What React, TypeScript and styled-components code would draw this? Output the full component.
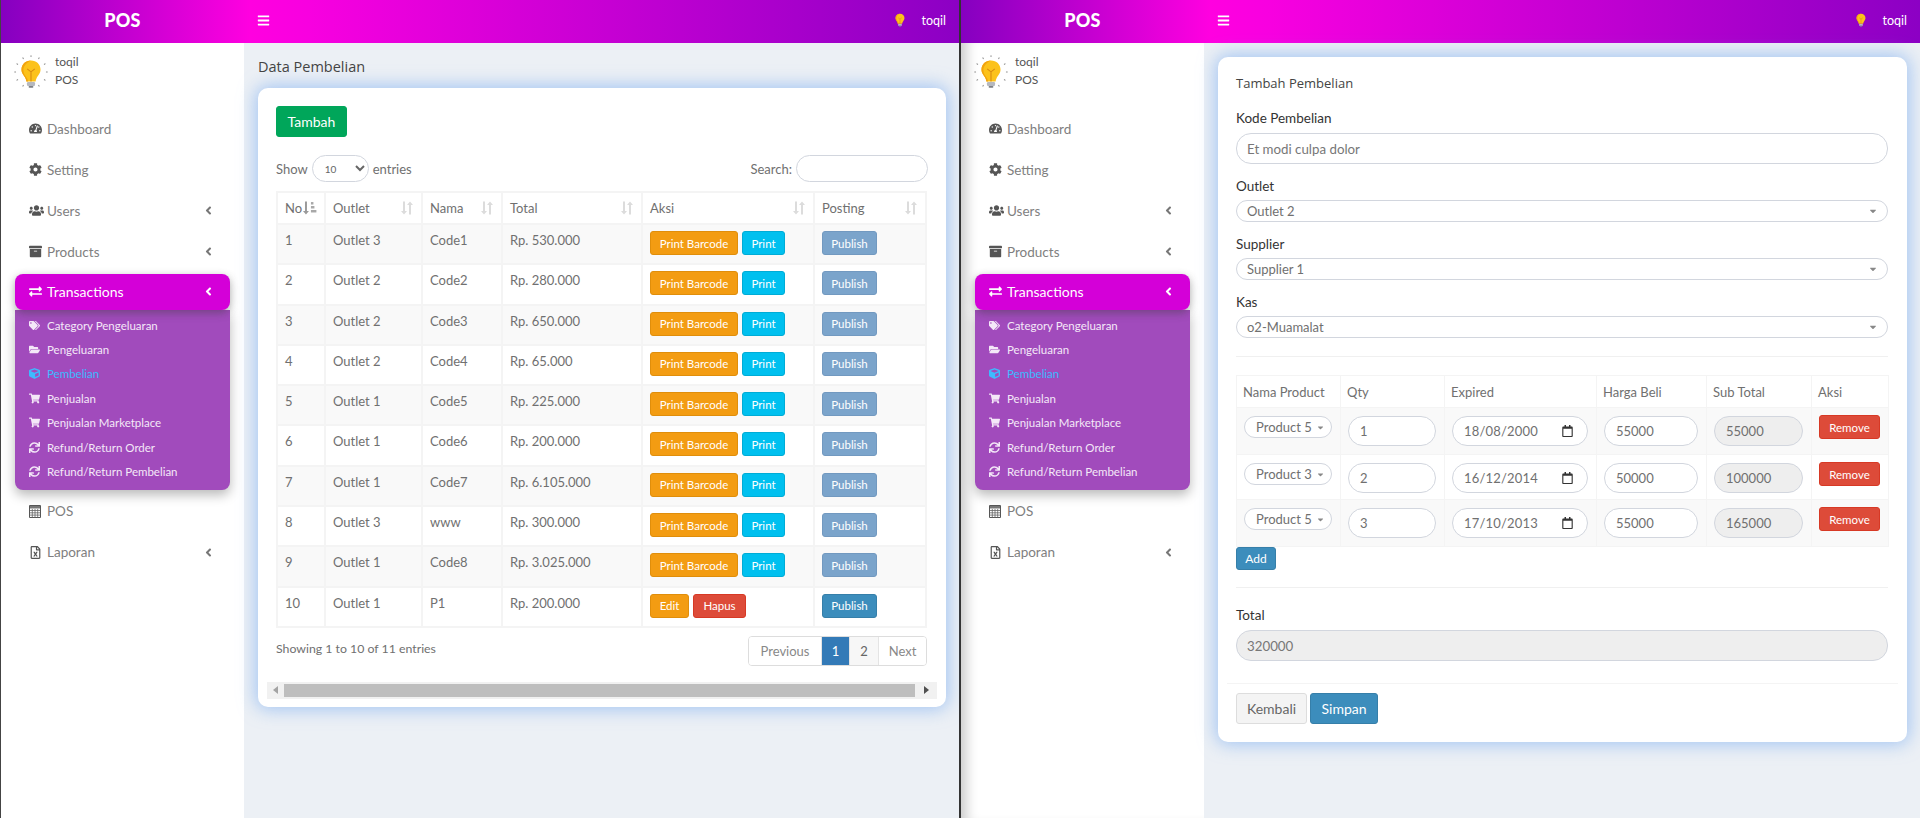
import React from "react";
import styled, { createGlobalStyle } from "styled-components";
import {
    FaAngleLeft,
    FaArchive,
    FaBars,
    FaCaretDown,
    FaCog,
    FaCube,
    FaExchangeAlt,
    FaFolderOpen,
    FaRegCalendar,
    FaRegFileExcel,
    FaShoppingCart,
    FaSync,
    FaTachometerAlt,
    FaTags,
    FaUsers,
} from "react-icons/fa";

const FONT = `Lato, "Open Sans", sans-serif`;

const GlobalStyle = createGlobalStyle`
    html, body {
        margin: 0;
        padding: 0;
        background: #ecf0f5;
    }

    * {
        box-sizing: border-box;
    }

    body {
        font-family: ${FONT};
    }
`;

const subItems = [
    { label: "Category Pengeluaran", icon: <FaTags /> },
    { label: "Pengeluaran", icon: <FaFolderOpen /> },
    { label: "Pembelian", icon: <FaCube />, active: true },
    { label: "Penjualan", icon: <FaShoppingCart /> },
    { label: "Penjualan Marketplace", icon: <FaShoppingCart /> },
    { label: "Refund/Return Order", icon: <FaSync /> },
    { label: "Refund/Return Pembelian", icon: <FaSync /> },
];

const purchases = [
    ["1", "Outlet 3", "Code1", "Rp. 530.000"],
    ["2", "Outlet 2", "Code2", "Rp. 280.000"],
    ["3", "Outlet 2", "Code3", "Rp. 650.000"],
    ["4", "Outlet 2", "Code4", "Rp. 65.000"],
    ["5", "Outlet 1", "Code5", "Rp. 225.000"],
    ["6", "Outlet 1", "Code6", "Rp. 200.000"],
    ["7", "Outlet 1", "Code7", "Rp. 6.105.000"],
    ["8", "Outlet 3", "www", "Rp. 300.000"],
    ["9", "Outlet 1", "Code8", "Rp. 3.025.000"],
    ["10", "Outlet 1", "P1", "Rp. 200.000"],
];

const purchaseColumns = [
    { label: "No", width: 48, sorted: true },
    { label: "Outlet", width: 97 },
    { label: "Nama", width: 80 },
    { label: "Total", width: 140 },
    { label: "Aksi", width: 172 },
    { label: "Posting", width: 112 },
];

const lines = [
    { product: "Product 5", qty: "1", expired: "18/08/2000", price: "55000", sub: "55000" },
    { product: "Product 3", qty: "2", expired: "16/12/2014", price: "50000", sub: "100000" },
    { product: "Product 5", qty: "3", expired: "17/10/2013", price: "55000", sub: "165000" },
];

const lineColumns = [
    { label: "Nama Product", width: 104 },
    { label: "Qty", width: 104 },
    { label: "Expired", width: 152 },
    { label: "Harga Beli", width: 110 },
    { label: "Sub Total", width: 105 },
    { label: "Aksi", width: 77 },
];

const BulbIcon = ({ size, rays }: { size: number; rays?: boolean }) => (
    <svg width={size} height={size} viewBox={rays ? "0 0 32 32" : "7 6 18 25"}>
        {rays &&
            [0, 30, 60, 90, 120, 150, 210, 240, 270, 300, 330].map((angle) => (
                <line
                    key={angle}
                    x1="16"
                    y1="0.3"
                    x2="16"
                    y2="1.9"
                    stroke="#8a8a8a"
                    strokeWidth="0.9"
                    transform={`rotate(${angle} 16 16)`}
                />
            ))}
        <g transform={rays ? "translate(16 17) scale(1.12) translate(-16 -18)" : undefined}>
            <path
                d="M16 7.5c-4.6 0-8 3.3-8 7.6 0 3.4 2.2 5 3.3 7.2.5 1 .7 1.7.8 2.7h7.8c.1-1 .3-1.7.8-2.7 1.1-2.2 3.3-3.8 3.3-7.2 0-4.3-3.4-7.6-8-7.6z"
                fill="#fcc21b"
            />
            <path
                d="M16 7.5c-4.6 0-8 3.3-8 7.6 0 3.4 2.2 5 3.3 7.2.5 1 .7 1.7.8 2.7h1.5c-.2-3-4-5-4-9.5 0-3.5 2.8-6.3 6.4-8z"
                fill="#f2a30f"
            />
            <path d="M12.8 14.5 16 17l3.2-2.5M16 17v8" stroke="#d98a10" strokeWidth="0.9" fill="none" />
            <rect x="12.6" y="25.5" width="6.8" height="3.4" rx="1" fill="#b5b8bf" />
            <rect x="14" y="28.9" width="4" height="1.5" rx="0.7" fill="#7d8087" />
        </g>
    </svg>
);

const CalculatorIcon = () => (
    <svg width="12" height="13" viewBox="0 0 12 13">
        <path d="M.5.5h11v12H.5z" fill="none" stroke="#555" />
        <path d="M1 1h10v2.5H1z" fill="#777" />
        <path d="M1 5.5h10M1 7.8h10M1 10.1h10M3.3 4v8.5M6 4v8.5M8.7 4v8.5" stroke="#666" strokeWidth="0.8" />
    </svg>
);

const SortIdle = () => (
    <svg width="15" height="14" viewBox="0 0 15 14">
        <path d="M4 .5h2V10h2l-3 3.5L2 10h2z" fill="#dcdcdc" />
        <path d="M10 13.5h2V4h2L11 .5 8 4h2z" fill="#dcdcdc" />
    </svg>
);

const SortActive = () => (
    <svg width="15" height="14" viewBox="0 0 15 14">
        <path d="M3 .5h2V10h2l-3 3.5L1 10h2z" fill="#9a9a9a" />
        <rect x="9" y="1" width="2.5" height="2.5" fill="#a8a8a8" />
        <rect x="9" y="5" width="3.5" height="2.5" fill="#a8a8a8" />
        <rect x="9" y="9" width="5.5" height="2.5" fill="#a8a8a8" />
    </svg>
);

const Sidebar = ({ shaded }: { shaded?: boolean }) => (
    <Side $shaded={shaded}>
        <UserPanel>
            <BulbIcon size={34} rays />
            <UserInfo>
                <span>toqil</span>
                <span>POS</span>
            </UserInfo>
        </UserPanel>
        <Menu>
            <MenuItem>
                <MenuIcon><FaTachometerAlt /></MenuIcon>
                Dashboard
            </MenuItem>
            <MenuItem>
                <MenuIcon><FaCog /></MenuIcon>
                Setting
            </MenuItem>
            <MenuItem>
                <MenuIcon $big><FaUsers /></MenuIcon>
                Users
                <Chevron><FaAngleLeft /></Chevron>
            </MenuItem>
            <MenuItem>
                <MenuIcon><FaArchive /></MenuIcon>
                Products
                <Chevron><FaAngleLeft /></Chevron>
            </MenuItem>
            <Group>
                <GroupHead>
                    <MenuIcon><FaExchangeAlt /></MenuIcon>
                    Transactions
                    <Chevron><FaAngleLeft /></Chevron>
                </GroupHead>
                <SubMenu>
                    {subItems.map((item) => (
                        <SubItem key={item.label} $active={item.active}>
                            <SubIcon>{item.icon}</SubIcon>
                            {item.label}
                        </SubItem>
                    ))}
                </SubMenu>
            </Group>
            <MenuItem>
                <MenuIcon><CalculatorIcon /></MenuIcon>
                POS
            </MenuItem>
            <MenuItem>
                <MenuIcon><FaRegFileExcel /></MenuIcon>
                Laporan
                <Chevron><FaAngleLeft /></Chevron>
            </MenuItem>
        </Menu>
    </Side>
);

const TopBar = () => (
    <Header>
        <Logo>POS</Logo>
        <Burger><FaBars /></Burger>
        <HeaderUser>
            <BulbIcon size={14} />
            <span>toqil</span>
        </HeaderUser>
    </Header>
);

const ListPage = () => (
    <Main>
        <PageTitle>Data Pembelian</PageTitle>
        <ListCard>
            <AddButton>Tambah</AddButton>
            <TableTools>
                <ToolGroup>
                    Show
                    <LengthSelect defaultValue="10">
                        <option value="10">10</option>
                    </LengthSelect>
                    entries
                </ToolGroup>
                <ToolGroup>
                    Search:
                    <SearchInput />
                </ToolGroup>
            </TableTools>
            <DataTable>
                <thead>
                    <tr>
                        {purchaseColumns.map((col) => (
                            <HeadCell key={col.label} $width={col.width}>
                                <HeadInner>
                                    {col.label}
                                    {col.sorted ? <SortActive /> : <SortIdle />}
                                </HeadInner>
                            </HeadCell>
                        ))}
                    </tr>
                </thead>
                <tbody>
                    {purchases.map((row, i) => {
                        const last = i === purchases.length - 1;
                        return (
                            <StripedRow key={row[0]}>
                                {row.map((value) => (
                                    <Cell key={value}>{value}</Cell>
                                ))}
                                <Cell>
                                    <Actions>
                                        {last ? (
                                            <>
                                                <SmallButton $width={39} $bg="#f39c12" $edge="#e08e0b">Edit</SmallButton>
                                                <SmallButton $width={53} $bg="#dd4b39" $edge="#d73925">Hapus</SmallButton>
                                            </>
                                        ) : (
                                            <>
                                                <SmallButton $width={88} $bg="#f39c12" $edge="#e08e0b">Print Barcode</SmallButton>
                                                <SmallButton $width={43} $bg="#00c0ef" $edge="#00acd6">Print</SmallButton>
                                            </>
                                        )}
                                    </Actions>
                                </Cell>
                                <Cell>
                                    <Actions>
                                        <SmallButton
                                            $width={55}
                                            $bg={last ? "#3c8dbc" : "#7ba4cb"}
                                            $edge={last ? "#367fa9" : "#7299c0"}
                                        >
                                            Publish
                                        </SmallButton>
                                    </Actions>
                                </Cell>
                            </StripedRow>
                        );
                    })}
                </tbody>
            </DataTable>
            <TableFooter>
                <span>Showing 1 to 10 of 11 entries</span>
                <Pagination>
                    <PageLink $width={72} $muted>Previous</PageLink>
                    <PageLink $width={28} $current>1</PageLink>
                    <PageLink $width={29} $grey>2</PageLink>
                    <PageLink $width={48} $muted>Next</PageLink>
                </Pagination>
            </TableFooter>
            <ScrollTrack>
                <ScrollArrow $width={17}>
                    <svg width="5" height="8" viewBox="0 0 5 8"><path d="M5 0v8L0 4z" fill="#a3a3a3" /></svg>
                </ScrollArrow>
                <ScrollThumb />
                <ScrollArrow $width={22}>
                    <svg width="5" height="8" viewBox="0 0 5 8"><path d="M0 0v8l5-4z" fill="#505050" /></svg>
                </ScrollArrow>
            </ScrollTrack>
        </ListCard>
    </Main>
);

const FormPage = () => (
    <Main>
        <FormCard>
            <FormBody>
                <FormTitle>Tambah Pembelian</FormTitle>
                <FieldLabel>Kode Pembelian</FieldLabel>
                <TextField defaultValue="Et modi culpa dolor" />
                <FieldLabel $tight>Outlet</FieldLabel>
                <PillSelect>Outlet 2<SelectCaret><FaCaretDown /></SelectCaret></PillSelect>
                <FieldLabel $tight>Supplier</FieldLabel>
                <PillSelect>Supplier 1<SelectCaret><FaCaretDown /></SelectCaret></PillSelect>
                <FieldLabel $tight>Kas</FieldLabel>
                <PillSelect>o2-Muamalat<SelectCaret><FaCaretDown /></SelectCaret></PillSelect>
                <Rule />
                <LineTable>
                    <thead>
                        <tr>
                            {lineColumns.map((col) => (
                                <LineHead key={col.label} $width={col.width}>{col.label}</LineHead>
                            ))}
                        </tr>
                    </thead>
                    <tbody>
                        {lines.map((line, i) => (
                            <LineRow key={i} $short={i === 1}>
                                <LineCell>
                                    <ProductSelect>
                                        {line.product}
                                        <ProductCaret><FaCaretDown /></ProductCaret>
                                    </ProductSelect>
                                </LineCell>
                                <LineCell>
                                    <CellField defaultValue={line.qty} />
                                </LineCell>
                                <LineCell>
                                    <DateField>
                                        {line.expired}
                                        <FaRegCalendar />
                                    </DateField>
                                </LineCell>
                                <LineCell>
                                    <CellField defaultValue={line.price} />
                                </LineCell>
                                <LineCell>
                                    <CellField defaultValue={line.sub} disabled />
                                </LineCell>
                                <LineCell>
                                    <Actions>
                                        <SmallButton $width={61} $bg="#dd4b39" $edge="#d73925">Remove</SmallButton>
                                    </Actions>
                                </LineCell>
                            </LineRow>
                        ))}
                    </tbody>
                </LineTable>
                <AddLine>Add</AddLine>
                <LowerRule />
                <FieldLabel>Total</FieldLabel>
                <TextField defaultValue="320000" disabled />
            </FormBody>
            <FormFooter>
                <BackButton>Kembali</BackButton>
                <SaveButton>Simpan</SaveButton>
            </FormFooter>
        </FormCard>
    </Main>
);

export default function App() {
    return (
        <>
            <GlobalStyle />
            <Screen>
                <LeftPane>
                    <TopBar />
                    <Body>
                        <Sidebar />
                        <ListPage />
                    </Body>
                </LeftPane>
                <RightPane>
                    <TopBar />
                    <Body>
                        <Sidebar shaded />
                        <FormPage />
                    </Body>
                </RightPane>
            </Screen>
        </>
    );
}

const Screen = styled.div`
    width: 1920px;
    height: 818px;
    display: grid;
    grid-template-columns: 960px 960px;
    overflow: hidden;
`;

const LeftPane = styled.div`
    display: flex;
    flex-direction: column;
    height: 818px;
    border-left: 1px solid #444;
    border-right: 1px solid #333;
`;

const RightPane = styled.div`
    display: flex;
    flex-direction: column;
    height: 818px;
    border-left: 1px solid #333;
`;

const Header = styled.header`
    height: 43px;
    flex: none;
    display: flex;
    align-items: center;
    padding-bottom: 3px;
    color: white;
    background: linear-gradient(90deg, #8500c0 0%, #ff00e0 26%, #f800e0 32%, #8c00c4 100%);
`;

const Logo = styled.div`
    width: 243px;
    flex: none;
    text-align: center;
    font-size: 18px;
    font-weight: 900;
    letter-spacing: 0.3px;
`;

const Burger = styled.div`
    display: flex;
    margin-left: 13px;
    font-size: 13px;
`;

const HeaderUser = styled.div`
    margin-left: auto;
    margin-right: 13px;
    display: flex;
    align-items: center;
    gap: 15px;
    font-size: 12.5px;
`;

const Body = styled.div`
    flex: 1;
    display: flex;
    min-height: 0;
`;

const Side = styled.aside<{ $shaded?: boolean }>`
    width: 243px;
    flex: none;
    background: white;
    box-shadow: ${({ $shaded }) => ($shaded ? "inset 14px 0 12px -8px rgba(0, 0, 0, 0.2)" : "none")};
`;

const UserPanel = styled.div`
    height: 65px;
    padding: 12px 0 0 13px;
    display: flex;
    gap: 7px;
`;

const UserInfo = styled.div`
    display: flex;
    flex-direction: column;
    gap: 4px;
    font-size: 12px;
    line-height: 14px;
    color: #555;
`;

const Menu = styled.nav`
    display: flex;
    flex-direction: column;
    font-size: 13.5px;
    color: #808080;
`;

const MenuItem = styled.div`
    height: 41px;
    display: flex;
    align-items: center;
    padding: 0 29px 0 28px;
`;

const MenuIcon = styled.span<{ $big?: boolean }>`
    width: 18px;
    flex: none;
    display: flex;
    font-size: ${({ $big }) => ($big ? 15 : 13)}px;
    color: #555;
`;

const Chevron = styled.span`
    margin-left: auto;
    display: flex;
    font-size: 13px;
    color: #777;
`;

const Group = styled.div`
    margin: 2px 14px 1px 14px;
    color: white;
`;

const GroupHead = styled.div`
    position: relative;
    z-index: 1;
    height: 36px;
    display: flex;
    align-items: center;
    padding: 0 15px 2px 14px;
    border-radius: 8px;
    background: #d400d8;
    box-shadow: 0 3px 8px rgba(60, 60, 60, 0.45);
    font-size: 14px;

    ${MenuIcon}, ${Chevron} {
        color: white;
    }
`;

const SubMenu = styled.div`
    padding: 3px 0 6px;
    border-radius: 0 0 8px 8px;
    background: #a14bbc;
    box-shadow: 0 5px 12px rgba(0, 0, 0, 0.28);
`;

const SubItem = styled.div<{ $active?: boolean }>`
    height: 24.4px;
    display: flex;
    align-items: center;
    padding-left: 14px;
    font-size: 11.5px;
    color: ${({ $active }) => ($active ? "#3cbcff" : "#f4e8f8")};
`;

const SubIcon = styled.span`
    width: 18px;
    flex: none;
    display: flex;
    font-size: 11px;
`;

const Main = styled.main`
    flex: 1;
    min-width: 0;
    padding: 14px 13px 0 14px;
    background: #ecf0f5;
`;

const PageTitle = styled.h1`
    margin: 0 0 12px;
    height: 19px;
    font-family: "Open Sans", sans-serif;
    font-size: 14.5px;
    font-weight: 400;
    line-height: 19px;
    color: #444;
`;

const ListCard = styled.section`
    height: 619px;
    padding: 18px 9px 9px;
    background: white;
    border-radius: 10px;
    box-shadow: 0 0 18px 2px rgba(110, 165, 240, 0.6);
    font-size: 13px;
    color: #707070;
`;

const AddButton = styled.button`
    display: block;
    width: 71px;
    height: 31px;
    margin-left: 9px;
    padding: 0;
    border: 1px solid #00a65a;
    border-radius: 3px;
    background: #00a65a;
    color: white;
    font-family: ${FONT};
    font-size: 14px;
`;

const TableTools = styled.div`
    display: flex;
    justify-content: space-between;
    align-items: center;
    height: 27px;
    margin: 18px 9px 9px 9px;
`;

const ToolGroup = styled.label`
    display: flex;
    align-items: center;
    gap: 4px;
    font-size: 13px;
    color: #707070;
`;

const LengthSelect = styled.select`
    width: 57px;
    height: 27px;
    padding: 0 8px;
    border: 1px solid #d2d6de;
    border-radius: 14px;
    background: white;
    color: #666;
    font-family: ${FONT};
    font-size: 10px;
`;

const SearchInput = styled.input`
    width: 132px;
    height: 27px;
    border: 1px solid #d2d6de;
    border-radius: 14px;
    background: white;
`;

const DataTable = styled.table`
    width: 650px;
    margin-left: 9px;
    table-layout: fixed;
    border-collapse: separate;
    border-spacing: 0;
    border: 1px solid #f4f4f4;
`;

const HeadCell = styled.th<{ $width: number }>`
    width: ${({ $width }) => $width}px;
    height: 32px;
    padding: 0 7px;
    border: 1px solid #f4f4f4;
    font-size: 13px;
    font-weight: 400;
    text-align: left;
    color: #707070;
`;

const HeadInner = styled.div`
    display: flex;
    justify-content: space-between;
    align-items: center;
`;

const StripedRow = styled.tr`
    &:nth-child(odd) {
        background: #f9f9f9;
    }
`;

const Cell = styled.td`
    height: 40.3px;
    padding: 7px 7px 0;
    border: 1px solid #f4f4f4;
    vertical-align: top;
    font-size: 13px;
    line-height: 16px;
    color: #707070;
`;

const Actions = styled.div`
    display: flex;
    gap: 4px;
    margin-top: -1px;
`;

const SmallButton = styled.button<{ $width: number; $bg: string; $edge: string }>`
    width: ${({ $width }) => $width}px;
    height: 24px;
    padding: 0;
    flex: none;
    border: 1px solid ${({ $edge }) => $edge};
    border-radius: 3px;
    background: ${({ $bg }) => $bg};
    color: white;
    font-family: ${FONT};
    font-size: 11.5px;
`;

const TableFooter = styled.div`
    display: flex;
    justify-content: space-between;
    align-items: flex-start;
    margin: 8px 10px 16px 9px;
    height: 30px;
    font-size: 12.3px;
    line-height: 26px;
    color: #707070;
`;

const Pagination = styled.div`
    display: flex;
    height: 30px;
    border: 1px solid #ddd;
    border-radius: 4px;
    overflow: hidden;
`;

const PageLink = styled.span<{ $width: number; $current?: boolean; $muted?: boolean; $grey?: boolean }>`
    width: ${({ $width }) => $width}px;
    display: flex;
    align-items: center;
    justify-content: center;
    font-size: 13px;
    color: ${({ $current, $muted }) => ($current ? "white" : $muted ? "#888" : "#666")};
    background: ${({ $current, $grey }) => ($current ? "#337ab7" : $grey ? "#f7f7f7" : "white")};
    & + & {
        border-left: 1px solid #e4e4e4;
    }
`;

const ScrollTrack = styled.div`
    height: 17px;
    display: flex;
    align-items: center;
    background: #f1f1f1;
`;

const ScrollArrow = styled.span<{ $width: number }>`
    width: ${({ $width }) => $width}px;
    flex: none;
    display: flex;
    justify-content: center;
`;

const ScrollThumb = styled.div`
    flex: 1;
    height: 13px;
    background: #bebebe;
`;

const FormCard = styled.section`
    height: 685px;
    background: white;
    border-radius: 10px;
    box-shadow: 0 0 18px 2px rgba(110, 165, 240, 0.6);
`;

const FormBody = styled.div`
    padding: 17px 19px 0 18px;
    height: 626px;
`;

const FormTitle = styled.h2`
    margin: 0 0 16px;
    height: 19px;
    font-family: "Open Sans", sans-serif;
    font-size: 13px;
    font-weight: 400;
    line-height: 19px;
    color: #444;
`;

const FieldLabel = styled.label<{ $tight?: boolean }>`
    display: block;
    height: ${({ $tight }) => ($tight ? 36 : 18)}px;
    margin-bottom: ${({ $tight }) => ($tight ? 0 : 6)}px;
    padding-top: ${({ $tight }) => ($tight ? 13 : 0)}px;
    font-size: 13.5px;
    font-weight: 400;
    line-height: 18px;
    color: #333;
`;

const TextField = styled.input`
    display: block;
    width: 100%;
    height: 31px;
    padding: 0 10px;
    border: 1px solid #d2d6de;
    border-radius: 15px;
    background: ${({ disabled }) => (disabled ? "#eee" : "white")};
    color: #777;
    font-family: ${FONT};
    font-size: 13.3px;
`;

const PillSelect = styled.div`
    height: 22px;
    padding: 0 9px 0 10px;
    display: flex;
    align-items: center;
    justify-content: space-between;
    border: 1px solid #d2d6de;
    border-radius: 11px;
    font-size: 13px;
    color: #707070;
`;

const SelectCaret = styled.span`
    display: flex;
    font-size: 10px;
    color: #888;
`;

const Rule = styled.hr`
    height: 1px;
    margin: 18px 0 18px;
    border: 0;
    background: #f0f0f0;
`;

const LowerRule = styled(Rule)`
    margin: 17px 0 18px;
`;

const LineTable = styled.table`
    width: 652px;
    table-layout: fixed;
    border-collapse: collapse;
    border: 1px solid #f4f4f4;
`;

const LineHead = styled.th<{ $width: number }>`
    width: ${({ $width }) => $width}px;
    height: 32px;
    padding: 0 6px;
    border: 1px solid #f4f4f4;
    font-size: 13px;
    font-weight: 400;
    text-align: left;
    color: #707070;
`;

const LineRow = styled.tr<{ $short?: boolean }>`
    height: ${({ $short }) => ($short ? 45 : 47)}px;
    &:nth-child(odd) {
        background: #f9f9f9;
    }
`;

const LineCell = styled.td`
    padding: 8px 8px 0 7px;
    border: 1px solid #f4f4f4;
    vertical-align: top;
`;

const ProductSelect = styled.div`
    width: 88px;
    height: 22px;
    display: flex;
    align-items: center;
    justify-content: space-between;
    padding: 0 6px 0 11px;
    border: 1px solid #d2d6de;
    border-radius: 11px;
    background: white;
    font-size: 13px;
    color: #707070;
`;

const ProductCaret = styled.span`
    display: flex;
    font-size: 9px;
    color: #888;
`;

const CellField = styled.input`
    display: block;
    width: 100%;
    height: 30px;
    padding: 0 11px;
    border: 1px solid #d2d6de;
    border-radius: 15px;
    background: ${({ disabled }) => (disabled ? "#eee" : "white")};
    color: #707070;
    font-family: ${FONT};
    font-size: 13px;
`;

const DateField = styled.div`
    height: 30px;
    display: flex;
    align-items: center;
    justify-content: space-between;
    padding: 0 14px 0 11px;
    border: 1px solid #d2d6de;
    border-radius: 15px;
    background: white;
    font-size: 13px;
    letter-spacing: 0.2px;
    color: #707070;

    svg {
        width: 11px;
        height: 12px;
        color: #333;
    }
`;

const AddLine = styled.button`
    display: block;
    width: 40px;
    height: 23px;
    padding: 0;
    border: 1px solid #367fa9;
    border-radius: 3px;
    background: #3c8dbc;
    color: white;
    font-family: ${FONT};
    font-size: 12px;
`;

const FormFooter = styled.div`
    height: 59px;
    margin: 0 9px;
    padding: 9px 9px 0;
    display: flex;
    gap: 3px;
    border-top: 1px solid #f4f4f4;
`;

const BackButton = styled.button`
    width: 71px;
    height: 31px;
    padding: 0;
    border: 1px solid #ddd;
    border-radius: 3px;
    background: #f4f4f4;
    color: #666;
    font-family: ${FONT};
    font-size: 14px;
`;

const SaveButton = styled.button`
    width: 68px;
    height: 31px;
    padding: 0;
    border: 1px solid #367fa9;
    border-radius: 3px;
    background: #3c8dbc;
    color: white;
    font-family: ${FONT};
    font-size: 14px;
`;
